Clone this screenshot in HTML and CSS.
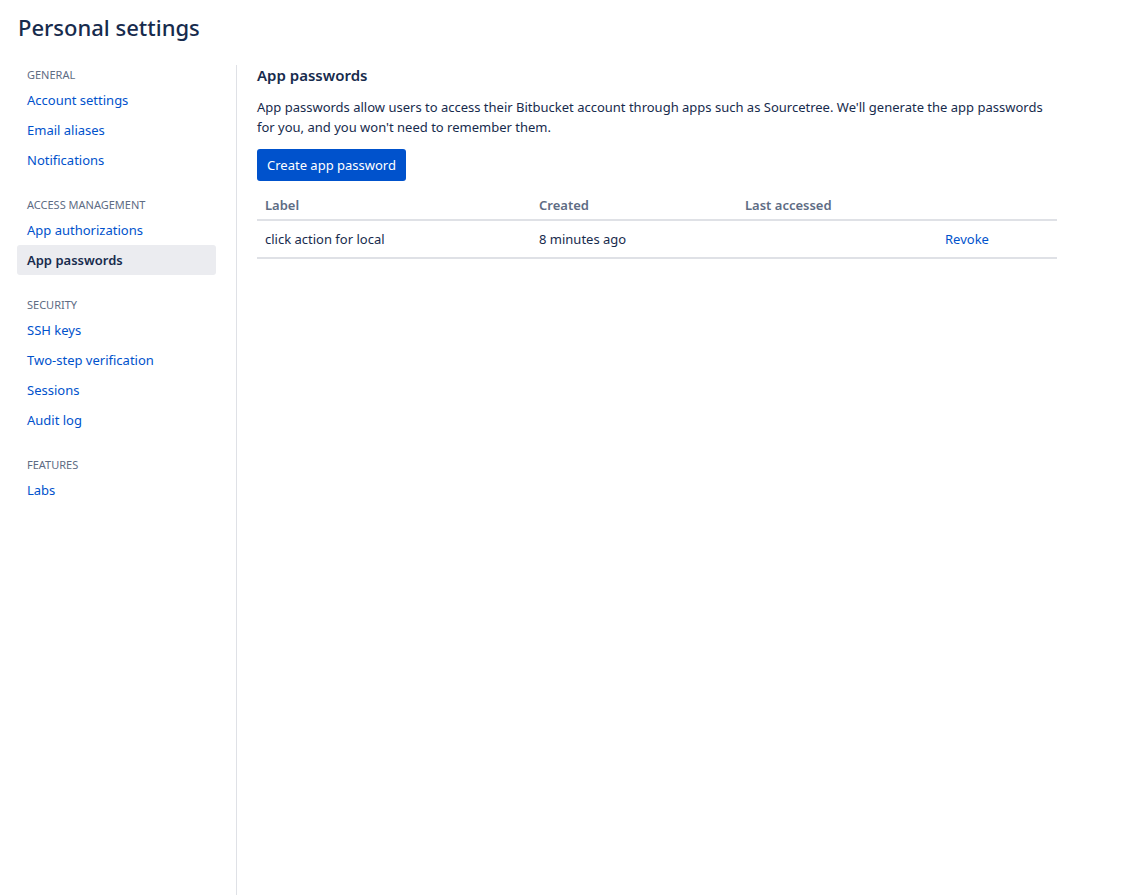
FILE: index.html
```html
<!DOCTYPE html>
<html lang="en">
<head>
    <meta charset="UTF-8">
    <title>Personal settings</title>
    <link rel="stylesheet" href="styles.css">
</head>
<body>
    <h1 class="page-title">Personal settings</h1>
    <div class="settings-layout">
        <nav class="sidebar">
            <div class="nav-group">
                <div class="nav-heading">GENERAL</div>
                <a href="#" class="nav-item">Account settings</a>
                <a href="#" class="nav-item">Email aliases</a>
                <a href="#" class="nav-item">Notifications</a>
            </div>
            <div class="nav-group">
                <div class="nav-heading">ACCESS MANAGEMENT</div>
                <a href="#" class="nav-item">App authorizations</a>
                <a href="#" class="nav-item active">App passwords</a>
            </div>
            <div class="nav-group">
                <div class="nav-heading">SECURITY</div>
                <a href="#" class="nav-item">SSH keys</a>
                <a href="#" class="nav-item">Two-step verification</a>
                <a href="#" class="nav-item">Sessions</a>
                <a href="#" class="nav-item">Audit log</a>
            </div>
            <div class="nav-group">
                <div class="nav-heading">FEATURES</div>
                <a href="#" class="nav-item">Labs</a>
            </div>
        </nav>
        <main class="content">
            <h2 class="section-title">App passwords</h2>
            <p class="intro">App passwords allow users to access their Bitbucket account through apps such as Sourcetree. We'll generate the app passwords for you, and you won't need to remember them.</p>
            <button class="primary-btn">Create app password</button>
            <table class="pw-table">
                <thead>
                    <tr>
                        <th class="col-label">Label</th>
                        <th class="col-created">Created</th>
                        <th class="col-accessed">Last accessed</th>
                        <th class="col-action"></th>
                    </tr>
                </thead>
                <tbody>
                    <tr>
                        <td>click action for local</td>
                        <td>8 minutes ago</td>
                        <td></td>
                        <td><a href="#" class="revoke">Revoke</a></td>
                    </tr>
                </tbody>
            </table>
        </main>
    </div>
</body>
</html>
```

FILE: styles.css
```css
body {
    margin: 0;
    font-family: "Noto Sans", "Open Sans", sans-serif;
    font-size: 13px;
    color: #172B4D;
    background: #fff;
}
.page-title {
    margin: 0;
    padding: 11px 18px 0;
    font-size: 22px;
    font-weight: 500;
    line-height: 32px;
    color: #172B4D;
}
.settings-layout {
    display: flex;
    margin-top: 22px;
    min-height: calc(100vh - 65px);
}
.sidebar {
    width: 237px;
    padding-left: 17px;
    padding-right: 20px;
    border-right: 1px solid #DFE1E6;
    box-sizing: border-box;
    flex-shrink: 0;
}
.nav-group {
    margin-bottom: 20px;
}
.nav-heading {
    font-size: 11px;
    color: #5E6C84;
    line-height: 20px;
    padding-left: 10px;
}
.nav-item {
    display: block;
    height: 30px;
    line-height: 30px;
    padding-left: 10px;
    color: #0052CC;
    text-decoration: none;
    border-radius: 3px;
}
.nav-item.active {
    background-color: #EBECF0;
    color: #172B4D;
    font-weight: 600;
}
.content {
    padding-left: 20px;
    width: 800px;
}
.section-title {
    margin: 0;
    font-size: 15px;
    font-weight: 600;
    line-height: 20px;
}
.intro {
    margin: 12px 0 12px;
    line-height: 20px;
}
.primary-btn {
    display: block;
    height: 32px;
    padding: 0 10px;
    background-color: #0052CC;
    color: #fff;
    border: none;
    border-radius: 3px;
    font-family: inherit;
    font-size: 13px;
    cursor: pointer;
}
.pw-table {
    width: 800px;
    border-collapse: collapse;
    margin-top: 14px;
}
.pw-table th {
    text-align: left;
    color: #5E6C84;
    font-weight: 600;
    padding: 0 8px 4px;
    line-height: 20px;
    border-bottom: 2px solid #DFE1E6;
}
.pw-table td {
    padding: 8px;
    line-height: 20px;
    border-bottom: 2px solid #DFE1E6;
}
.col-label { width: 258px; }
.col-created { width: 190px; }
.col-accessed { width: 184px; }
.revoke {
    color: #0052CC;
    text-decoration: none;
}
```
